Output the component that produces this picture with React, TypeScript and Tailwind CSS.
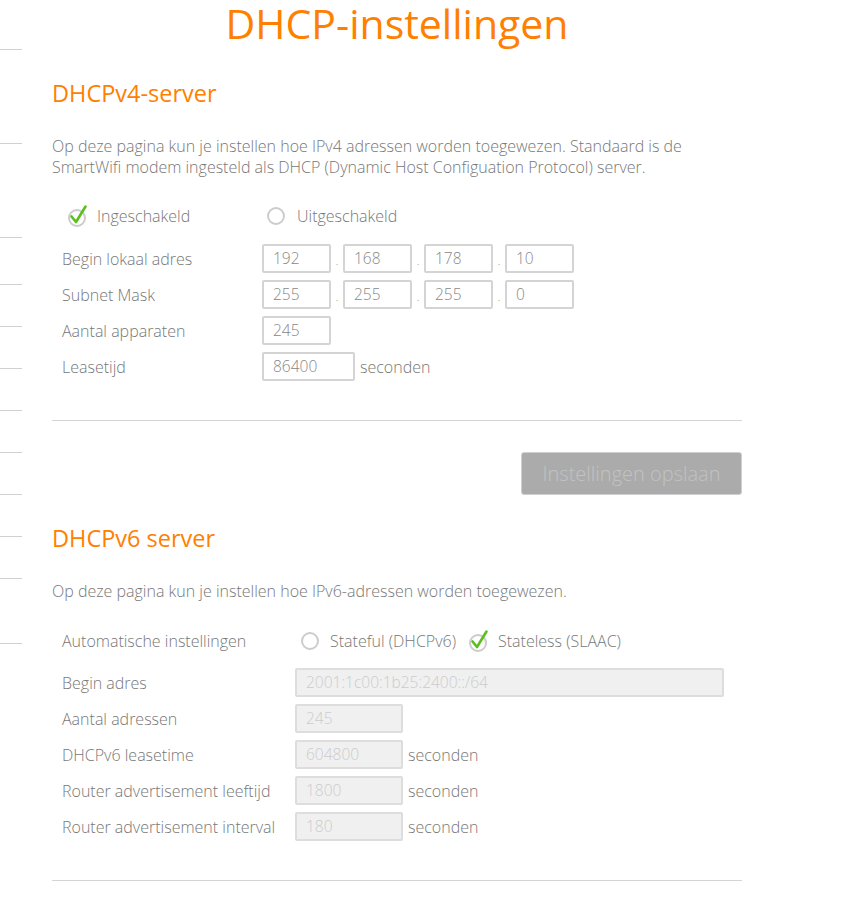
import React from 'react';

const sideGaps = [50, 94, 94, 47, 42, 42, 42, 42, 42, 42, 42, 65];

const Check = () => (
  <svg width="22" height="24" viewBox="0 0 22 24" className="shrink-0">
    <circle cx="10" cy="14" r="8" fill="none" stroke="#cccccc" strokeWidth="2" />
    <path d="M4.5 12.5 L9 18 L18.5 2.5" fill="none" stroke="#5cbf1f" strokeWidth="2.6" strokeLinecap="round" strokeLinejoin="round" />
  </svg>
);

const Radio = () => (
  <span className="block w-[18px] h-[18px] shrink-0 rounded-full border-2 border-[#cccccc]" />
);

const Box = ({ value, w = 'w-[69px]', disabled = false }: { value: string; w?: string; disabled?: boolean }) => (
  <div
    className={`${w} h-[29px] rounded-[2px] border-2 pl-[9px] flex items-center text-[15.5px] ${
      disabled ? 'bg-[#f0f0f0] border-[#dddddd] text-[#cccccc]' : 'bg-white border-[#d4d4d4] text-[#888888]'
    }`}
  >
    {value}
  </div>
);

const Dot = () => <span className="w-[12px] text-center text-[#999] text-[13px] self-end pb-[3px]">.</span>;

const Row = ({ label, lw, children }: { label: string; lw: string; children: React.ReactNode }) => (
  <div className="flex items-center h-[29px] pl-[10px]">
    <span className={`${lw} shrink-0`}>{label}</span>
    <div className="flex items-center">{children}</div>
  </div>
);

const Sec = () => <span className="ml-[5px]">seconden</span>;

export default function App() {
  return (
    <div
      className="min-h-screen bg-white flex text-[16px] text-[#777777] font-light"
      style={{ fontFamily: '"Open Sans", "Noto Sans", sans-serif' }}
    >
      {/* left menu remnants */}
      <div className="w-[22px] shrink-0 flex flex-col">
        {sideGaps.map((h, i) => (
          <div key={i} className="border-b border-[#d0d0d0]" style={{ height: h }} />
        ))}
      </div>

      <main className="ml-[30px] w-[690px] flex flex-col">
        <h1 className="text-center text-[41px] leading-[46px] font-normal text-[#ff8000]">DHCP-instellingen</h1>

        {/* DHCPv4 */}
        <h2 className="mt-[34px] text-[23.5px] leading-[26px] font-normal text-[#ff8000]">DHCPv4-server</h2>
        <p className="mt-[30px] leading-[21px]">
          Op deze pagina kun je instellen hoe IPv4 adressen worden toegewezen. Standaard is de
          <br />
          SmartWifi modem ingesteld als DHCP (Dynamic Host Configuation Protocol) server.
        </p>

        <div className="mt-[23px] h-[30px] flex items-center pl-[15px]">
          <div className="flex items-center gap-[8px] w-[200px]">
            <Check />
            <span>Ingeschakeld</span>
          </div>
          <div className="flex items-center gap-[12px]">
            <Radio />
            <span>Uitgeschakeld</span>
          </div>
        </div>

        <div className="mt-[13px] flex flex-col gap-[7px]">
          <Row label="Begin lokaal adres" lw="w-[200px]">
            <Box value="192" />
            <Dot />
            <Box value="168" />
            <Dot />
            <Box value="178" />
            <Dot />
            <Box value="10" />
          </Row>
          <Row label="Subnet Mask" lw="w-[200px]">
            <Box value="255" />
            <Dot />
            <Box value="255" />
            <Dot />
            <Box value="255" />
            <Dot />
            <Box value="0" />
          </Row>
          <Row label="Aantal apparaten" lw="w-[200px]">
            <Box value="245" />
          </Row>
          <Row label="Leasetijd" lw="w-[200px]">
            <Box value="86400" w="w-[93px]" />
            <Sec />
          </Row>
        </div>

        <hr className="mt-[39px] border-t border-[#d4d4d4]" />

        <div className="mt-[31px] flex justify-end">
          <button className="w-[221px] h-[43px] rounded-[3px] bg-[#ababab] border border-[#cfcfcf] text-[20px] text-[#c2c2c2] font-light">
            Instellingen opslaan
          </button>
        </div>

        {/* DHCPv6 */}
        <h2 className="mt-[30px] text-[23.5px] leading-[26px] font-normal text-[#ff8000]">DHCPv6 server</h2>
        <p className="mt-[30px] leading-[21px]">Op deze pagina kun je instellen hoe IPv6-adressen worden toegewezen.</p>

        <div className="mt-[24px] h-[29px] flex items-center pl-[10px]">
          <span className="w-[239px] shrink-0">Automatische instellingen</span>
          <div className="flex items-center gap-[11px]">
            <Radio />
            <span>Stateful (DHCPv6)</span>
          </div>
          <div className="flex items-center gap-[8px] ml-[12px]">
            <Check />
            <span>Stateless (SLAAC)</span>
          </div>
        </div>

        <div className="mt-[13px] flex flex-col gap-[7px]">
          <Row label="Begin adres" lw="w-[233px]">
            <Box value="2001:1c00:1b25:2400::/64" w="w-[429px]" disabled />
          </Row>
          <Row label="Aantal adressen" lw="w-[233px]">
            <Box value="245" w="w-[108px]" disabled />
          </Row>
          <Row label="DHCPv6 leasetime" lw="w-[233px]">
            <Box value="604800" w="w-[108px]" disabled />
            <Sec />
          </Row>
          <Row label="Router advertisement leeftijd" lw="w-[233px]">
            <Box value="1800" w="w-[108px]" disabled />
            <Sec />
          </Row>
          <Row label="Router advertisement interval" lw="w-[233px]">
            <Box value="180" w="w-[108px]" disabled />
            <Sec />
          </Row>
        </div>

        <hr className="mt-[39px] border-t border-[#d4d4d4]" />
      </main>
    </div>
  );
}
